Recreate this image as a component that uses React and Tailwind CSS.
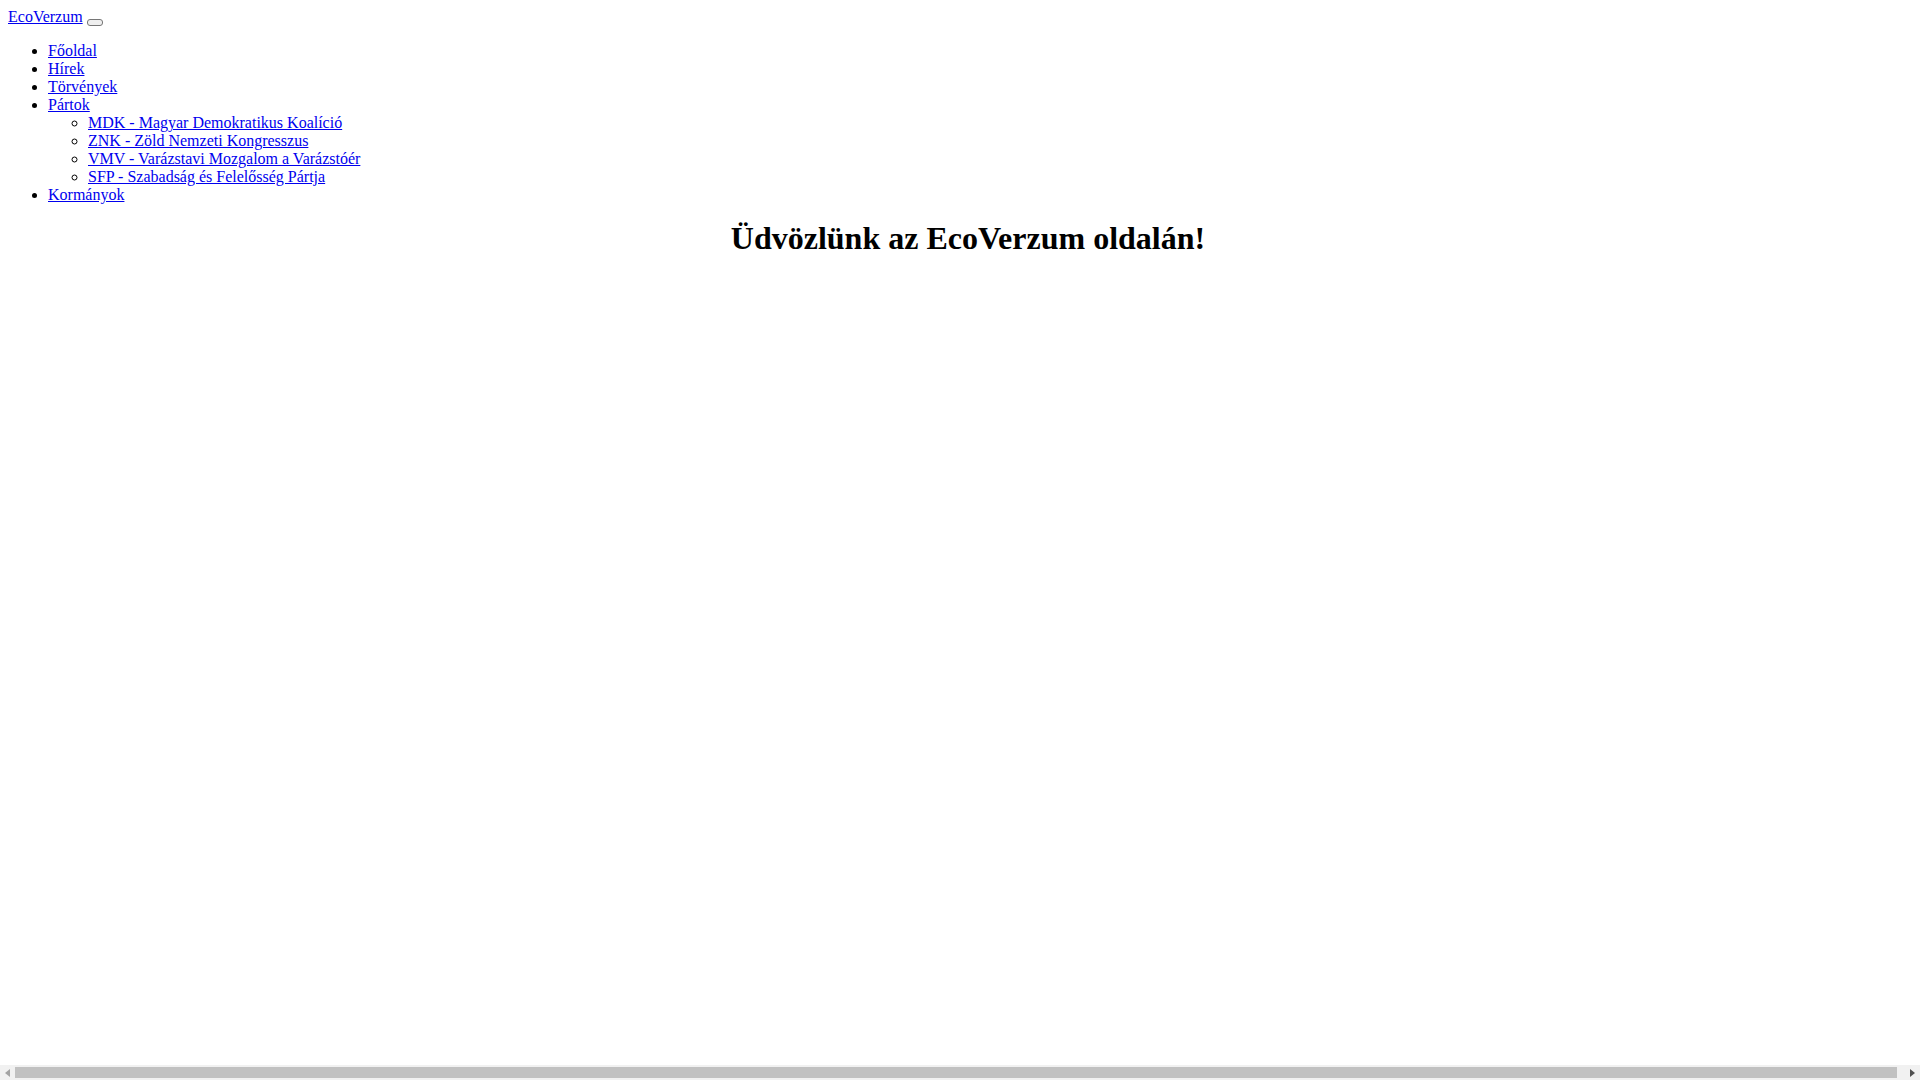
export default function App() {
  const link = "text-[#0000ee] underline";
  return (
    <div className="px-2 pt-2 font-['Liberation_Serif','Times_New_Roman',serif] text-[16px] leading-[normal] text-black bg-white min-h-screen">
      <nav>
        <a href="#" className={link}>EcoVerzum</a>{" "}
        <button
          type="button"
          className="inline-block align-[-3px] w-[16px] h-[7px] border border-[#767676] bg-[#efefef] rounded-[3px] p-0"
        ></button>
        <div>
          <ul className="list-disc pl-10 my-4">
            <li><a href="#" className={link}>Főoldal</a></li>
            <li><a href="#" className={link}>Hírek</a></li>
            <li><a href="#" className={link}>Törvények</a></li>
            <li>
              <a href="#" className={link}>Pártok</a>
              <ul className="list-[circle] pl-10">
                <li><a href="#" className={link}>MDK - Magyar Demokratikus Koalíció</a></li>
                <li><a href="#" className={link}>ZNK - Zöld Nemzeti Kongresszus</a></li>
                <li><a href="#" className={link}>VMV - Varázstavi Mozgalom a Varázstóér</a></li>
                <li><a href="#" className={link}>SFP - Szabadság és Felelősség Pártja</a></li>
              </ul>
            </li>
            <li><a href="#" className={link}>Kormányok</a></li>
          </ul>
        </div>
      </nav>
      <main className="w-screen">
        <h1 className="text-[32px] font-bold text-center mt-[16px] mb-[21px] leading-[normal]">
          Üdvözlünk az EcoVerzum oldalán!
        </h1>
      </main>
      <div className="fixed left-0 bottom-0 w-screen h-[15px] bg-[#f1f1f1] flex items-center">
        <div className="w-[15px] h-[15px] flex items-center justify-center">
          <svg width="5" height="8" viewBox="0 0 5 8"><path d="M5 0 L0 4 L5 8 Z" fill="#a3a3a3" /></svg>
        </div>
        <div className="flex-1 h-[11px] bg-[#c1c1c1] mr-[8px]"></div>
        <div className="w-[15px] h-[15px] flex items-center justify-center">
          <svg width="5" height="8" viewBox="0 0 5 8"><path d="M0 0 L5 4 L0 8 Z" fill="#505050" /></svg>
        </div>
      </div>
    </div>
  );
}
